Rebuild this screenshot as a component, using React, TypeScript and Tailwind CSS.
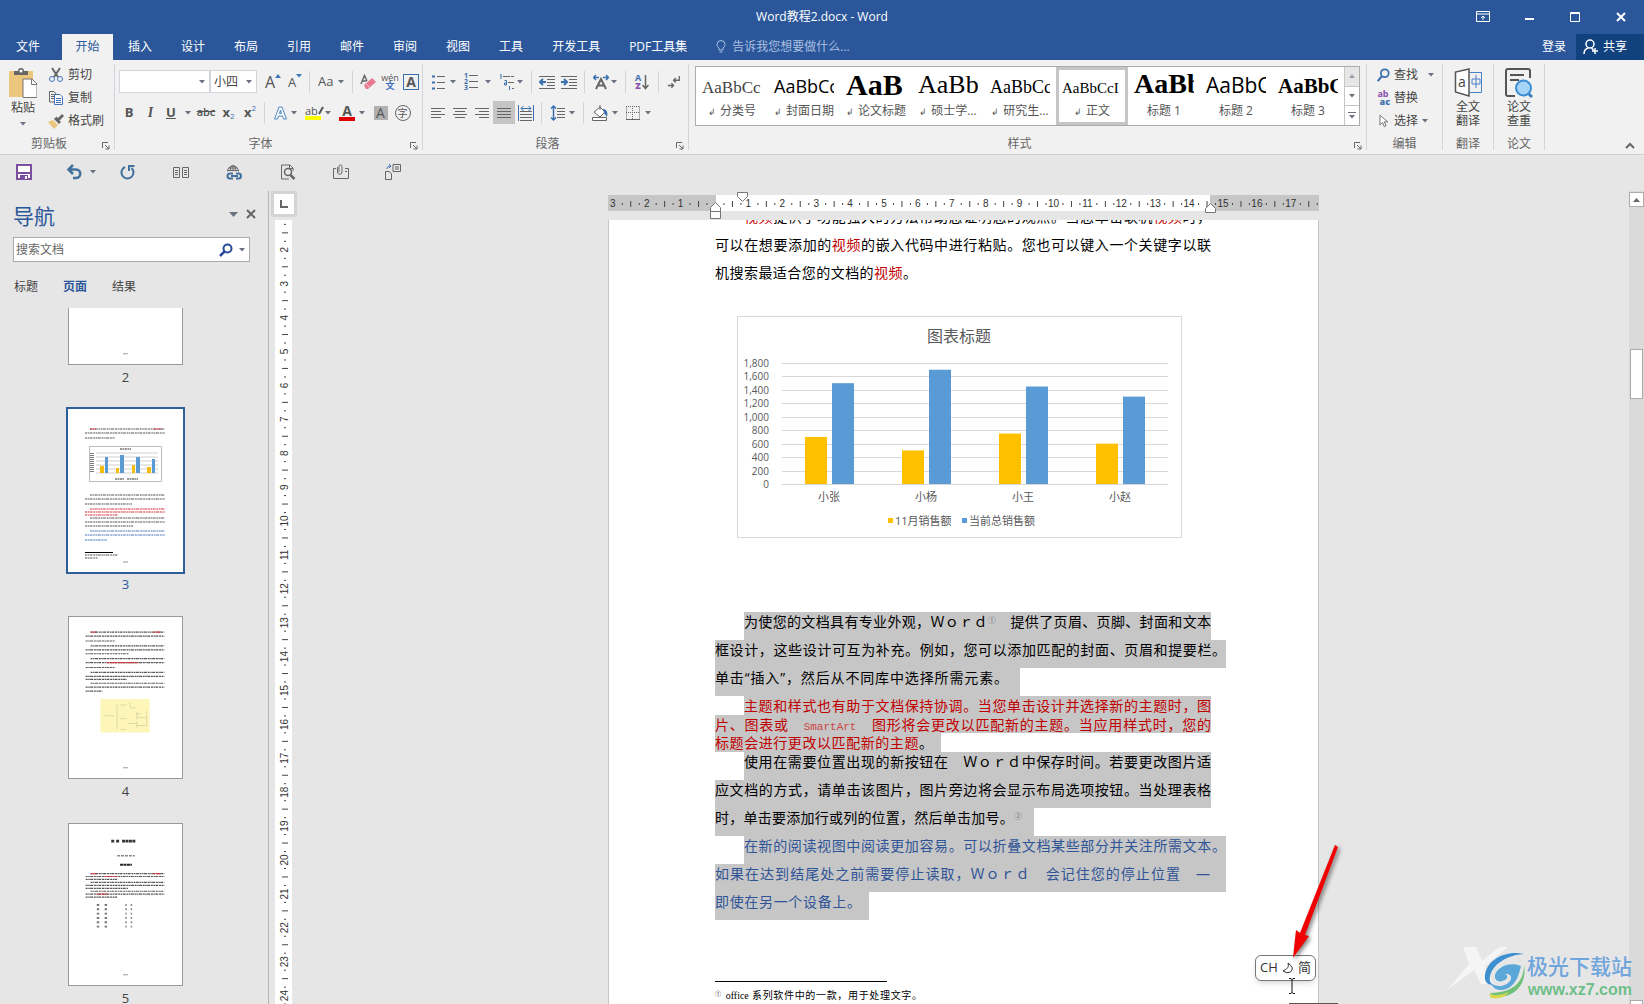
import type { ReactNode } from "react";

const Caret = ({ className = "text-gray-500" }: { className?: string }) => (
  <svg viewBox="0 0 6 4" className={`h-1 w-1.5 shrink-0 ${className}`} fill="currentColor">
    <path d="M0 0h6L3 3.5z" />
  </svg>
);

const Sep = () => <div className="mx-1 h-[22px] w-px shrink-0 bg-gray-300" />;

interface ToolProps {
  label: string;
  width: string;
  caret?: boolean;
  active?: boolean;
  children: ReactNode;
}

function Tool({ label, width, caret, active, children }: ToolProps) {
  return (
    <button
      aria-label={label}
      className={`flex h-[23px] shrink-0 items-center ${width} ${caret ? "justify-between pr-1 pl-1" : "justify-center"} ${active ? "bg-[#c5c5c5]" : ""}`}
    >
      {children}
      {caret && <Caret />}
    </button>
  );
}

function Icon({ children, size = "h-4 w-4", box = "0 0 16 16" }: { children: ReactNode; size?: string; box?: string }) {
  return (
    <svg viewBox={box} className={`shrink-0 ${size}`} fill="none" stroke="#666" strokeWidth="1">
      {children}
    </svg>
  );
}

function Group({ label, width, launcher, children }: { label: string; width: string; launcher?: boolean; children: ReactNode }) {
  return (
    <section className={`my-1 flex shrink-0 flex-col border-r border-gray-300 ${width}`}>
      <div className="h-[72px]">{children}</div>
      <div className={`relative h-[14px] text-center leading-[15px] text-[#666] ${launcher ? "pr-4" : ""}`}>
        {label}
        {launcher && (
          <button aria-label={`${label}设置`} className="absolute right-1 bottom-0">
            <Icon size="h-2 w-2" box="0 0 8 8">
              <path d="M.5 6V.5H6M3 3l4 4M7 3.5V7H3.5" />
            </Icon>
          </button>
        )}
      </div>
    </section>
  );
}

const tabs = ["插入", "设计", "布局", "引用", "邮件", "审阅", "视图", "工具", "开发工具", "PDF工具集"];

function TitleBar() {
  return (
    <header className="bg-[#2b579a] text-white">
      <div className="flex h-[34px] items-center">
        <div className="flex-1" />
        <h1 className="text-xs">Word教程2.docx - Word</h1>
        <div className="flex flex-1 justify-end">
          <button aria-label="功能区显示选项" className="flex w-[46px] justify-center">
            <svg viewBox="0 0 14 12" className="h-3 w-3.5" fill="none" stroke="#fff">
              <path d="M.5.5h13v10H.5zM.5 3h13M7 9V5M5 7l2-2 2 2" />
            </svg>
          </button>
          <button aria-label="最小化" className="flex w-[46px] justify-center">
            <svg viewBox="0 0 12 12" className="h-3 w-3" stroke="#fff" strokeWidth="2">
              <path d="M2 8h9" />
            </svg>
          </button>
          <button aria-label="最大化" className="flex w-[46px] justify-center">
            <svg viewBox="0 0 12 12" className="h-3 w-3" fill="none" stroke="#fff">
              <path d="M1.500 1.500h9v9h-9zM1 2.500h10" />
            </svg>
          </button>
          <button aria-label="关闭" className="flex w-[46px] justify-center">
            <svg viewBox="0 0 12 12" className="h-3 w-3" stroke="#fff" strokeWidth="2">
              <path d="M2 2l8 8M10 2l-8 8" />
            </svg>
          </button>
        </div>
      </div>
      <nav className="flex h-[26px] items-stretch">
        <button className="w-[62px] pr-1.5">文件</button>
        <button className="mr-[2px] w-[51px] bg-[#f1f1f1] text-[#2b579a]">开始</button>
        <div className="flex gap-[3px]">
          {tabs.map((tab) => (
            <button key={tab} className="px-[13px]">{tab}</button>
          ))}
        </div>
        <label className="ml-4 flex flex-1 items-center gap-1.5">
          <svg viewBox="0 0 10 14" className="h-3.5 w-2.5" fill="none" stroke="#a9c1e5">
            <path d="M3 10V8C1 6.500 1 5 1 4.500a4 4 0 018 0C9 5 9 6.500 7 8v2zM3.500 12h3" />
          </svg>
          <input className="w-40 text-xs text-white placeholder:text-[#a9bfe0] focus:outline-none" placeholder="告诉我您想要做什么..." />
        </label>
        <button className="px-[10px]">登录</button>
        <button className="flex w-[68px] items-center gap-1 bg-[#12427e] pl-[7px]">
          <svg viewBox="0 0 16 16" className="h-4 w-4" fill="none" stroke="#fff" strokeWidth="1.500">
            <circle cx="7" cy="5" r="4" />
            <path d="M1 15c0-3 2-5.500 4.500-6M8.500 9l2 2M12 9v6M9 12h6" />
          </svg>
          共享
        </button>
      </nav>
    </header>
  );
}

function ClipboardGroup() {
  return (
    <Group label="剪贴板" width="w-[115px]" launcher>
      <div className="flex">
        <button className="flex w-[46px] flex-col items-center pt-1">
          <svg viewBox="0 0 28 30" className="h-[30px] w-7">
            <path d="M0 3h24v26H0z" fill="#ecc67d" />
            <path d="M5 3h4a3 3 0 016 0h4v4H5z" fill="#666" />
            <circle cx="12" cy="3" r="1.500" fill="#fff" />
            <path d="M14 11h9l5 5v13.500H14z" fill="#fff" stroke="#777" />
            <path d="M22.500 11v5.500H28" fill="none" stroke="#777" />
          </svg>
          <span className="h-5 leading-5 text-[#444]">粘贴</span>
          <span className="pt-1"><Caret /></span>
        </button>
        <div className="flex flex-col pl-0.5 text-[#444]">
          <button className="flex h-[22px] items-center gap-1">
            <Icon>
              <path d="M4 1l6 9M12 1L6 10" strokeWidth="2" />
              <circle cx="4" cy="12" r="2.500" stroke="#4472b8" />
              <circle cx="12" cy="12" r="2.500" stroke="#4472b8" />
            </Icon>
            剪切
          </button>
          <button className="flex h-[23px] items-center gap-1">
            <Icon>
              <path d="M6 12H1.500V1.500H6L8 4M3 4.500h3M3 6.500h3M3 8.500h3" stroke="#666" />
              <path d="M6.500 4.500H12l2.500 2.500v7.500h-8zM8 8.500h5M8 10.500h5M8 12.500h5" stroke="#4472b8" fill="#fff" />
            </Icon>
            复制
          </button>
          <button className="flex h-[23px] items-center gap-1">
            <Icon>
              <path d="M0 9l5-2 5 5-4 4z" fill="#ecc67d" stroke="none" />
              <path d="M6 6l5 5 2-2-1.500-1.500L16 3l-2-2-4 4-1.500-1.500z" fill="#666" stroke="none" />
            </Icon>
            格式刷
          </button>
        </div>
      </div>
    </Group>
  );
}

function Combo({ label, value, width }: { label: string; value: string; width: string }) {
  return (
    <div className={`relative flex h-[23px] items-center border border-gray-300 bg-white ${width}`}>
      <select aria-label={label} defaultValue={value} className="h-full w-full appearance-none pl-[3px] text-xs text-[#444]">
        <option>{value}</option>
      </select>
      <span className="pointer-events-none absolute right-1 flex"><Caret /></span>
    </div>
  );
}

function FontGroup() {
  return (
    <Group label="字体" width="w-[308px]" launcher>
      <div className="flex flex-col gap-2 pt-[6px] pl-1 text-[#555]">
        <div className="flex items-center">
          <Combo label="字体" value="" width="w-[91px]" />
          <Combo label="字号" value="小四" width="w-[47px]" />
          <Tool label="增大字号" width="w-[24px] ml-1">
            <span className="text-base leading-4">A</span>
            <span className="mb-3 text-[#3b78b8]"><svg viewBox="0 0 6 4" className="h-1 w-1.5" fill="currentColor"><path d="M0 4h6L3 0z" /></svg></span>
          </Tool>
          <Tool label="减小字号" width="w-[20px]">
            <span className="text-[13px] leading-4">A</span>
            <span className="mb-3 flex"><Caret className="text-[#3b78b8]" /></span>
          </Tool>
          <Sep />
          <Tool label="更改大小写" width="w-[34px]" caret><span className="text-[13px]">Aa</span></Tool>
          <Sep />
          <Tool label="清除格式" width="w-[22px]">
            <Icon>
              <path d="M1 10L4.500 1.500 7 7M2.500 7h4" strokeWidth="1.500" />
              <path d="M4 11l8-7 4 4-8 7H6z" fill="#e8798e" stroke="none" />
              <path d="M6 9.500l3.500 4" stroke="#f8d0d8" />
            </Icon>
          </Tool>
          <Tool label="拼音指南" width="w-[22px]">
            <span className="flex flex-col items-center text-[9px] leading-[8px]">wén<b className="font-bold text-[#3b6fc4]">文</b></span>
          </Tool>
          <Tool label="字符边框" width="w-[20px]">
            <span className="h-4 w-4 border border-[#3b6fae] text-sm leading-[14px] font-bold">A</span>
          </Tool>
        </div>
        <div className="flex items-center">
          <Tool label="加粗" width="w-[20px]"><b className="text-[13px]">B</b></Tool>
          <Tool label="倾斜" width="w-[23px]"><i className="font-['Liberation_Serif',serif] text-sm font-bold">I</i></Tool>
          <Tool label="下划线" width="w-[33px]" caret><span className="text-[13px] font-bold underline">U</span></Tool>
          <Tool label="删除线" width="w-[22px]"><s className="text-[11px] font-semibold">abc</s></Tool>
          <Tool label="下标" width="w-[23px]"><b className="text-[13px]">x</b><span className="mt-2 text-[8px] text-[#3b6fae]">2</span></Tool>
          <Tool label="上标" width="w-[20px]"><b className="text-[13px]">x</b><span className="mb-2 text-[8px] text-[#3b6fae]">2</span></Tool>
          <Sep />
          <Tool label="文本效果" width="w-[32px]" caret>
            <Icon>
              <path d="M1.500 14L6 2h3l4.500 12h-3l-1-3h-4l-1 3zM6.500 8.500h2L7.500 5z" stroke="#4a86c8" fill="#fff" />
            </Icon>
          </Tool>
          <Tool label="突出显示" width="w-[34px]" caret>
            <span className="flex flex-col">
              <span className="flex h-[11px] items-center text-[11px] leading-[10px]">ab
                <svg viewBox="0 0 6 10" className="h-2.5 w-1.5" stroke="#555" strokeWidth="2"><path d="M5 1L1 8" /></svg>
              </span>
              <span className="h-1 w-4 bg-[#ffff00]" />
            </span>
          </Tool>
          <Tool label="字体颜色" width="w-[34px]" caret>
            <span className="flex flex-col items-center">
              <b className="h-3 text-sm leading-3">A</b>
              <span className="h-1 w-4 bg-[#e00000]" />
            </span>
          </Tool>
          <Tool label="字符底纹" width="w-[23px]">
            <span className="h-3.5 w-3.5 bg-[#b0b0b0] text-sm leading-[14px]">A</span>
          </Tool>
          <Tool label="带圈字符" width="w-[21px]">
            <span className="h-4 w-4 rounded-full border border-[#666] text-[10px] leading-[14px]">字</span>
          </Tool>
        </div>
      </div>
    </Group>
  );
}

function ParagraphGroup() {
  return (
    <Group label="段落" width="w-[266px]" launcher>
      <div className="flex flex-col gap-2 pt-[6px] pl-1">
        <div className="flex items-center">
          <Tool label="项目符号" width="w-[33px]" caret>
            <Icon>
              <path d="M6 2.500h8M6 8.500h8M6 14.500h8" />
              <path d="M1 1.500h3v2H1zM1 7.500h3v2H1zM1 13.500h3v2H1z" fill="#3b6fae" stroke="none" />
            </Icon>
          </Tool>
          <Tool label="编号" width="w-[35px]" caret>
            <span className="flex">
              <span className="flex flex-col text-[7px] leading-[6px] font-bold text-[#3b6fae]"><i className="not-italic">1</i><i className="not-italic">2</i><i className="not-italic">3</i></span>
              <Icon size="h-4 w-2.5" box="0 0 10 16"><path d="M1 2.500h9M1 8.500h9M1 14.500h9" /></Icon>
            </span>
          </Tool>
          <Tool label="多级列表" width="w-[32px]" caret>
            <Icon>
              <path d="M4 2.500h11M9 8.500h6M13 14.500h2" strokeDasharray="7 1" />
              <path d="M1 1l1-.5V5M5.500 6.500h2V11h-2V9h2M10.500 12v4" stroke="#3b6fae" />
            </Icon>
          </Tool>
          <Sep />
          <Tool label="减少缩进" width="w-[22px]">
            <Icon>
              <path d="M0 2.500h16M8 5.500h8M8 8.500h8M8 11.500h8M0 14.500h16" />
              <path d="M7 8H2M4 5L1 8l3 3" stroke="#3b6fae" strokeWidth="2" />
            </Icon>
          </Tool>
          <Tool label="增加缩进" width="w-[22px]">
            <Icon>
              <path d="M0 2.500h16M8 5.500h8M8 8.500h8M8 11.500h8M0 14.500h16" />
              <path d="M0 8h5M3 5l3 3-3 3" stroke="#3b6fae" strokeWidth="2" />
            </Icon>
          </Tool>
          <Sep />
          <Tool label="中文版式" width="w-[32px]" caret>
            <Icon>
              <path d="M3 15L8 5l5 10M5 11.500h6" strokeWidth="2" />
              <path d="M6 3.500H1M3 1L.5 3.500 3 6M10 3.500h5M13 1l2.500 2.500L13 6" stroke="#3b6fae" strokeWidth="1.500" />
            </Icon>
          </Tool>
          <Sep />
          <Tool label="排序" width="w-[24px]">
            <span className="flex flex-col text-[9px] leading-[8px] font-bold text-[#3b6fae]">A<b className="text-[#8a4fae]">Z</b></span>
            <Icon size="h-4 w-2" box="0 0 8 16"><path d="M4.500 1v13M1.500 11l3 3.500 3-3.500" strokeWidth="1.500" /></Icon>
          </Tool>
          <Sep />
          <Tool label="显示编辑标记" width="w-[22px]">
            <Icon size="h-3.5 w-3.5">
              <path d="M14 1v5H8M10 3.500L7.500 6 10 8.500M1 12h6M5 9.500L7.500 12 5 14.500" strokeWidth="1.500" />
            </Icon>
          </Tool>
        </div>
        <div className="flex items-center">
          <Tool label="左对齐" width="w-[22px]"><Icon size="h-3.5 w-3.5" box="0 0 14 14"><path d="M0 2.500h14M0 5.500h10M0 8.500h14M0 11.500h10" /></Icon></Tool>
          <Tool label="居中" width="w-[22px]"><Icon size="h-3.5 w-3.5" box="0 0 14 14"><path d="M0 2.500h14M2 5.500h10M0 8.500h14M2 11.500h10" /></Icon></Tool>
          <Tool label="右对齐" width="w-[22px]"><Icon size="h-3.5 w-3.5" box="0 0 14 14"><path d="M0 2.500h14M4 5.500h10M0 8.500h14M4 11.500h10" /></Icon></Tool>
          <Tool label="两端对齐" width="w-[22px]" active><Icon size="h-3.5 w-3.5" box="0 0 14 14"><path d="M0 2.500h14M0 5.500h14M0 8.500h14M0 11.500h14" /></Icon></Tool>
          <Tool label="分散对齐" width="w-[22px]">
            <Icon>
              <path d="M.5 0v16M15.500 0v16M3 3.500h10M5.500 1L3 3.500 5.500 6M10.500 1L13 3.500 10.500 6" stroke="#3b6fae" />
              <path d="M2 6.500h12M2 9.500h12M2 12.500h12M2 15.500h12" />
            </Icon>
          </Tool>
          <Sep />
          <Tool label="行距" width="w-[33px]" caret>
            <Icon>
              <path d="M3.500 1v14M1 3.500L3.500 1 6 3.500M1 12.500L3.500 15 6 12.500" stroke="#3b6fae" strokeWidth="1.500" />
              <path d="M7 3.500h8M7 6.500h8M7 9.500h8M7 12.500h8" />
            </Icon>
          </Tool>
          <Sep />
          <Tool label="底纹" width="w-[34px]" caret>
            <Icon>
              <path d="M2 7l6-5 5 5-5 5zM8 5V0" fill="#fff" />
              <path d="M11 4c4 0 5 4 4 8l-3-4z" fill="#3b6fae" stroke="none" />
              <path d="M.5 12.500h14v3H.5z" fill="#fff" />
            </Icon>
          </Tool>
          <Tool label="边框" width="w-[33px]" caret>
            <Icon size="h-3.5 w-3.5" box="0 0 14 14">
              <path d="M.5.5v13M13.500.5v13M6.500 0v14M0 .5h14M0 6.500h14" strokeDasharray="1 1" />
              <path d="M0 13.500h14" />
            </Icon>
          </Tool>
        </div>
      </div>
    </Group>
  );
}

const styleItems = [
  { name: "分类号", sample: "AaBbCc", mark: true, look: "text-[17px] font-light text-[#444] font-['Liberation_Serif',serif]" },
  { name: "封面日期", sample: "AaBbCc", mark: true, look: "text-[18px] font-medium" },
  { name: "论文标题", sample: "AaB", mark: true, look: "text-[30px] font-black font-['Liberation_Serif',serif]" },
  { name: "硕士学...", sample: "AaBb", mark: true, look: "text-[26px] font-['Liberation_Serif',serif]" },
  { name: "研究生...", sample: "AaBbCc", mark: true, look: "text-[18px] font-['Liberation_Serif',serif]" },
  { name: "正文", sample: "AaBbCcI", mark: true, selected: true, look: "text-[15px] font-['Liberation_Serif',serif]" },
  { name: "标题 1", sample: "AaBb", look: "text-[28px] font-bold font-['Liberation_Serif',serif]" },
  { name: "标题 2", sample: "AaBbC", look: "text-[21px]" },
  { name: "标题 3", sample: "AaBbC", look: "text-[21px] font-bold font-['Liberation_Serif',serif]" },
];

function StylesGroup() {
  return (
    <Group label="样式" width="w-[678px]" launcher>
      <div className="mt-[2px] ml-[6px] flex h-[60px] w-[665px] border border-[#ababab] bg-white">
        {styleItems.map((item) => (
          <button key={item.name} className={`w-[72px] shrink-0 overflow-hidden border-[3px] px-[3px] ${item.selected ? "border-[#c6c6c6]" : "border-transparent"}`}>
            <div className="h-[34px] w-[60px] overflow-hidden text-left text-base leading-[34px] whitespace-nowrap text-black">
              <span className={`leading-none ${item.look}`}>{item.sample}</span>
            </div>
            <div className="h-[18px] text-center text-xs leading-[14px] whitespace-nowrap text-[#555]">
              {item.mark && <span className="mr-1 text-[9px]">↲</span>}
              {item.name}
            </div>
          </button>
        ))}
        <div className="flex w-[15px] flex-col border-l border-[#c6c6c6]">
          <button aria-label="上一行" className="flex flex-1 items-center justify-center bg-[#e6e6e6]"><svg viewBox="0 0 6 4" className="h-1 w-1.5 text-gray-400" fill="currentColor"><path d="M0 4h6L3 0z" /></svg></button>
          <button aria-label="下一行" className="flex flex-1 items-center justify-center border-y border-[#c6c6c6]"><Caret /></button>
          <button aria-label="其他样式" className="flex flex-1 flex-col items-center justify-center gap-0.5"><span className="h-px w-2 bg-gray-500" /><Caret /></button>
        </div>
      </div>
    </Group>
  );
}

function Ribbon() {
  return (
    <div className="flex h-[95px] border-b border-[#d0d0d0] bg-[#f1f1f1]">
      <ClipboardGroup />
      <FontGroup />
      <ParagraphGroup />
      <StylesGroup />
      <Group label="编辑" width="w-[76px]">
        <div className="flex flex-col pl-[9px] text-[#444]">
          <button className="flex h-[22px] items-center gap-1">
            <Icon size="h-3.5 w-3.5">
              <circle cx="10" cy="6" r="4.500" stroke="#3b6fae" strokeWidth="2" />
              <path d="M7 9l-5 6" stroke="#3b6fae" strokeWidth="2.500" />
            </Icon>
            查找<span className="ml-1.5"><Caret /></span>
          </button>
          <button className="flex h-[23px] items-center gap-1">
            <span className="flex w-3.5 flex-col text-[9px] leading-[8px] font-bold text-[#8a4fae]">ab<b className="text-right text-[#3b6fae]">ac</b></span>
            替换
          </button>
          <button className="flex h-[23px] items-center gap-1">
            <Icon size="h-3.5 w-3.5"><path d="M4.500 1.500v11l3-3 2 5 2-1-2-4.500h4z" fill="#fff" /></Icon>
            选择<Caret />
          </button>
        </div>
      </Group>
      <Group label="翻译" width="w-[51px]">
        <button className="flex w-full flex-col items-center pt-1 leading-[14px] text-[#444]">
          <svg viewBox="0 0 28 30" className="mb-0.5 h-[30px] w-7" fill="none" stroke="#555">
            <path d="M15 1L1.500 4v20L15 28z" fill="#fff" strokeWidth="1.500" />
            <path d="M16 4.500h11.500v20H16M18 11h8v5h-8zM22 7v13" stroke="#4a80c8" />
            <text x="4" y="19" fontSize="14" fill="#444" stroke="none">a</text>
          </svg>
          全文<br />翻译
        </button>
      </Group>
      <Group label="论文" width="w-[51px]">
        <button className="flex w-full flex-col items-center pt-1 leading-[14px] text-[#444]">
          <svg viewBox="0 0 28 30" className="mb-0.5 h-[30px] w-7" fill="none" stroke="#555" strokeWidth="2">
            <path d="M25 10V3q0-2-2-2H3Q1 1 1 3v23q0 2 2 2h7M5 7h14M5 12h9" />
            <path d="M23 25l4 4" stroke="#3b7fc0" strokeWidth="3" />
            <circle cx="18.500" cy="20" r="7.500" fill="#a6d4f5" stroke="#3b8fd8" />
          </svg>
          论文<br />查重
        </button>
      </Group>
      <div className="flex flex-1 items-end justify-end p-1 pr-[9px]">
        <button aria-label="折叠功能区" className="flex">
          <Icon size="h-2 w-2.5" box="0 0 10 8"><path d="M1 6l4-4 4 4" strokeWidth="2" /></Icon>
        </button>
      </div>
    </div>
  );
}

function QuickAccess() {
  return (
    <div className="flex h-9 items-center pb-0.5 pl-4">
      <button aria-label="保存" className="w-12">
        <svg viewBox="0 0 16 16" className="h-4 w-4">
          <path d="M1 1h14v14H1z" fill="#fff" stroke="#7b4fa0" strokeWidth="2" />
          <path d="M1 8h14v2H1zM4 11h8v4H4z" fill="#7b4fa0" />
          <path d="M9 12h2v3H9z" fill="#fff" />
        </svg>
      </button>
      <button aria-label="撤消" className="flex w-14 items-center gap-2 pl-0.5">
        <Icon><path d="M7 1L2.500 5.500 7 10M3 5.500h7a4 4 0 010 8.500H7" stroke="#41719c" strokeWidth="2.500" /></Icon>
        <Caret />
      </button>
      <button aria-label="恢复" className="w-[53px]">
        <Icon><path d="M5 3a6 6 0 106.500 1M9 7V2h5.500" stroke="#41719c" strokeWidth="2" /></Icon>
      </button>
      <button aria-label="双页" className="w-[53px]">
        <Icon><path d="M.5 3.500h6v10h-6zM9.500 3.500h6v10h-6zM2 6.500h3M2 8.500h3M2 10.500h3M11 6.500h3M11 8.500h3M11 10.500h3" /></Icon>
      </button>
      <button aria-label="超链接" className="w-[54px]">
        <Icon>
          <path d="M1.500 7.500a5.500 5.500 0 1111 0M7 1v6M1.500 6.500h11M2.500 4h9M4.500 7q-.5-4 2-6M9.500 7q.5-4-2-6" />
          <path d="M7 9.500H4a2.300 2.300 0 000 5h3M10 9.500h2.500a2.300 2.300 0 010 5H10M5 12h7" stroke="#41719c" strokeWidth="2" />
        </Icon>
      </button>
      <button aria-label="打印预览" className="w-[53px]">
        <Icon>
          <path d="M13 7V4l-3-3H1.500v14H9M9.500 1v3.500H13" />
          <circle cx="8" cy="8" r="3.500" strokeWidth="1.500" />
          <path d="M10.500 11l4 4" strokeWidth="2.500" />
        </Icon>
      </button>
      <button aria-label="附件" className="w-[52px]">
        <Icon>
          <path d="M3 4.500H.5v10h15v-10H12M12 7.500h2" />
          <path d="M4.500 3v5a2 2 0 004.500 0V2.500a1.500 1.500 0 00-3 0V8" />
        </Icon>
      </button>
      <button aria-label="切换窗口">
        <Icon>
          <path d="M.5 7.500H4l2.500 2v6h-6zM8 .5h7.500v7H8zM10 3h4M10 5h4" />
          <path d="M2 5c0-2 1-3 4-3M4 0l2 2-2 2" stroke="#3b6fae" />
        </Icon>
      </button>
    </div>
  );
}

// one blurred-down paragraph line in a page thumbnail
function MiniLine({ y, x = 17, w = 80, color = "#555" }: { y: number; x?: number; w?: number; color?: string }) {
  return <path d={`M${x} ${y}h${w}`} stroke={color} strokeWidth="1.200" strokeDasharray="2 .6 1.400 .5 3 .8" />;
}

function Thumb({ page, selected, children }: { page: number; selected?: boolean; children?: ReactNode }) {
  return (
    <a href={`#page-${page}`} className="flex flex-col items-center">
      <svg viewBox="0 0 115 163" className={`h-[163px] w-[115px] bg-white ${selected ? "outline-2 outline-[#2f5f97]" : "border border-[#999]"}`} fill="none">
        {children}
        <path d="M55 153h5" stroke="#999" />
      </svg>
      <span className={`h-6 text-[13px] leading-6 ${selected ? "text-[#2b579a]" : "text-[#444]"}`}>{page}</span>
    </a>
  );
}

function NavPane() {
  const red = "#d8303a";
  return (
    <aside className="flex w-[269px] shrink-0 flex-col border-r border-[#b5b5b5] text-[#444]">
      <div className="flex h-[46px] shrink-0 items-center pr-3 pl-[13px]">
        <h2 className="flex-1 pt-1 text-[21px] text-[#2b579a]">导航</h2>
        <button aria-label="选项" className="mr-2 text-gray-500">
          <svg viewBox="0 0 9 5" className="h-[5px] w-[9px]" fill="currentColor"><path d="M0 0h9L4.500 5z" /></svg>
        </button>
        <button aria-label="关闭导航"><Icon size="h-2.5 w-2.5" box="0 0 10 10"><path d="M1 1l8 8M9 1L1 9" strokeWidth="2" /></Icon></button>
      </div>
      <div className="mr-[18px] ml-[13px] flex h-[25px] shrink-0 items-center border border-[#ababab] bg-white pr-1 pl-0.5">
        <input aria-label="搜索文档" placeholder="搜索文档" className="min-w-0 flex-1 text-xs placeholder:text-[#666]" />
        <button aria-label="搜索" className="mr-1.5">
          <Icon size="h-3.5 w-3.5" box="0 0 14 14">
            <circle cx="8.500" cy="5.500" r="4" stroke="#2b4a9a" strokeWidth="2" />
            <path d="M5.500 8.500L1 13" stroke="#2b4a9a" strokeWidth="2.500" />
          </Icon>
        </button>
        <Caret />
      </div>
      <div className="flex h-[46px] shrink-0 items-center gap-[25px] pt-1 pl-[14px]">
        <button>标题</button>
        <button className="font-bold text-[#2b579a]">页面</button>
        <button>结果</button>
      </div>
      <div className="flex min-h-0 flex-1 flex-col overflow-hidden pr-[17px]">
        <div className="-mt-[106px] flex flex-col gap-5 [clip-path:inset(106px_0_0_0)]">
          <Thumb page={2} />
          <Thumb page={3} selected>
            <MiniLine y={20} x={22} w={75} />
            <MiniLine y={20} x={22} w={6} color={red} />
            <MiniLine y={20} x={86} w={7} color={red} />
            <MiniLine y={24} />
            <MiniLine y={29} w={30} />
            <path d="M21.500 37.500h72v35h-72z" stroke="#bbb" />
            <path d="M28 44h62M28 48h62M28 52h62M28 56h62M28 60h62M28 64h62" stroke="#bbb" strokeWidth=".7" />
            <path d="M52 40h11M47 70h9M59 70h11" stroke="#777" strokeWidth="1.500" strokeDasharray="2 .5" />
            <path d="M24 44v20" stroke="#777" strokeWidth="4" strokeDasharray="1 1" />
            <path d="M32 57h4v7h-4zM48 59h3v5h-3zM64 56h3v8h-3zM79 58h4v6h-4z" fill="#f5bd10" />
            <path d="M37 48h3v16h-3zM52 46h4v18h-4zM68 48h4v16h-4zM84 50h3v14h-3z" fill="#5b9bd5" />
            <MiniLine y={86} x={22} w={75} />
            <MiniLine y={90} />
            <MiniLine y={95} w={47} />
            <MiniLine y={100} x={22} w={75} color={red} />
            <MiniLine y={103} color={red} />
            <MiniLine y={106} w={33} color={red} />
            <MiniLine y={109} x={22} w={75} />
            <MiniLine y={113} />
            <MiniLine y={117} w={48} />
            <MiniLine y={122} x={22} w={75} color="#4a76c0" />
            <MiniLine y={126} color="#4a76c0" />
            <MiniLine y={131} w={22} color="#4a76c0" />
            <path d="M17 143.500h28" stroke="#000" />
            <MiniLine y={146} w={33} />
            <MiniLine y={149} w={13} />
          </Thumb>
          <Thumb page={4}>
            <MiniLine y={15} x={22} w={75} />
            <MiniLine y={15} x={22} w={6} color={red} />
            <MiniLine y={15} x={86} w={7} color={red} />
            <MiniLine y={19} />
            <MiniLine y={24} w={30} />
            <MiniLine y={29} x={22} w={75} />
            <MiniLine y={33} />
            <MiniLine y={37} w={44} />
            <MiniLine y={42} x={22} w={75} />
            <MiniLine y={46} />
            <MiniLine y={46} x={39} w={31} color={red} />
            <MiniLine y={51} w={30} />
            <MiniLine y={56} x={22} w={75} />
            <MiniLine y={60} />
            <MiniLine y={63} w={42} />
            <MiniLine y={67} x={22} w={75} />
            <MiniLine y={71} />
            <MiniLine y={75} w={17} />
            <path d="M32 83h50v34H32z" fill="#fdf6b8" />
            <path d="M36 100h10M52 89h7M52 103h7M52 114h6M49 89v25M62 86v5M62 92h6M69 96v8M69 98h4M69 102h9M60 108h9M69 106v6M69 110h9M79 95v16" stroke="#c4bc98" strokeWidth=".5" />
          </Thumb>
          <Thumb page={5}>
            <path d="M43 17h30" stroke="#333" strokeWidth="3" strokeDasharray="3 2 3 3 3 .5 3 .5 3 .5 3 9" />
            <path d="M49 32h18" stroke="#888" strokeWidth="1.500" strokeDasharray="3 1" />
            <path d="M52 41h12" stroke="#222" strokeWidth="2" strokeDasharray="3 .5" />
            <MiniLine y={50} x={22} w={75} />
            <MiniLine y={50} x={22} w={6} color={red} />
            <MiniLine y={50} x={86} w={7} color={red} />
            <MiniLine y={53} />
            <MiniLine y={53} x={36} w={13} color={red} />
            <MiniLine y={56} w={32} />
            <MiniLine y={59} x={22} w={75} />
            <MiniLine y={62} />
            <MiniLine y={65} w={43} />
            <MiniLine y={68} x={22} w={75} />
            <MiniLine y={71} />
            <MiniLine y={71} x={29} w={10} color={red} />
            <MiniLine y={74} w={32} />
            <path d="M29.500 81v26M37.500 81v26" stroke="#777" strokeWidth="2.500" strokeDasharray="2 2.400" />
            <path d="M58 81v26M63.500 81v26" stroke="#888" strokeWidth="1.500" strokeDasharray="2 2.400" />
          </Thumb>
        </div>
      </div>
    </aside>
  );
}

const UNIT = 33.9;

function VerticalRuler() {
  const marks = Array.from({ length: 25 }, (_, i) => i + 1);
  return (
    <div className="flex w-[29px] shrink-0 flex-col items-center">
      <button aria-label="制表符" className="flex h-[26px] w-[26px] shrink-0 items-center justify-center border-[3px] border-[#d4d4d4] bg-white">
        <Icon size="h-2 w-2" box="0 0 8 8"><path d="M1 0v7h7" strokeWidth="2" /></Icon>
      </button>
      <svg className="mt-[3px] min-h-0 w-[17px] flex-1 bg-white" stroke="#444">
        {marks.map((n) => {
          const y = n * UNIT - 38;
          return (
            <g key={n}>
              {n > 1 && <text fontFamily="Liberation Sans" fontSize="10" fill="#333" stroke="none" textAnchor="middle" transform={`translate(13 ${y}) rotate(-90)`}>{n}</text>}
              <path d={`M9 ${y + UNIT / 4}h2M7 ${y + UNIT / 2}h6M9 ${y + UNIT * 0.75}h2`} />
            </g>
          );
        })}
      </svg>
    </div>
  );
}

function HorizontalRuler() {
  const marks = Array.from({ length: 21 }, (_, i) => i - 3);
  return (
    <svg viewBox="0 0 711 29" className="z-10 h-[29px] w-[711px] shrink-0" stroke="#444">
      <path d="M0 4h711v16H0z" fill="#c6c6c6" stroke="none" />
      <path d="M108 4h494v16H108z" fill="#fff" stroke="none" />
      {marks.map((n) => {
        const x = 107.5 + n * UNIT;
        return (
          <g key={n}>
            {n !== 0 && <text x={x - 1} y="16" fontFamily="Liberation Sans" fontSize="10" fill="#333" stroke="none" textAnchor="middle">{Math.abs(n)}</text>}
            <path d={`M${x + UNIT / 4} 12v2M${x + UNIT / 2} 10v6M${x + UNIT * 0.75} 12v2`} />
          </g>
        );
      })}
      <path d="M129.500 1.500h10v4l-5 5-5-5z" fill="#fff" stroke="#777" />
      <path d="M102.500 20.500v-4l5-5 5 5v4zM102.500 20.500h10v7h-10z" fill="#fff" stroke="#777" />
      <path d="M597.500 21.500v-4l5-5 5 5v4z" fill="#fff" stroke="#777" />
    </svg>
  );
}

const chartData = [
  { name: "小张", month: 700, total: 1500 },
  { name: "小杨", month: 500, total: 1700 },
  { name: "小王", month: 750, total: 1450 },
  { name: "小赵", month: 600, total: 1300 },
];

function SalesChart() {
  const scale = 121 / 1800;
  return (
    <svg viewBox="0 0 443 220" className="mt-[25px] ml-[22px] h-[222px] w-[445px] border border-[#d9d9d9]" fill="#595959" fontSize="11">
      <text x="221" y="25" fontSize="16" textAnchor="middle">图表标题</text>
      {Array.from({ length: 10 }, (_, i) => i * 200).map((v) => (
        <g key={v}>
          <path d={`M44 ${Math.round(167 - v * scale) + 0.5}h386`} stroke="#d9d9d9" />
          <text x="31" y={171 - v * scale} fontSize="10" textAnchor="end">{v.toLocaleString("en-US")}</text>
        </g>
      ))}
      {chartData.map((d, i) => {
        const x = 67 + i * 97;
        return (
          <g key={d.name}>
            <rect x={x} y={167 - d.month * scale} width="22" height={d.month * scale} fill="#ffc000" />
            <rect x={x + 27} y={167 - d.total * scale} width="22" height={d.total * scale} fill="#5b9bd5" />
            <text x={x + 24} y="184" textAnchor="middle">{d.name}</text>
          </g>
        );
      })}
      <path d="M150 201h5v5h-5z" fill="#ffc000" />
      <text x="157" y="208">11月销售额</text>
      <path d="M224 201h5v5h-5z" fill="#5b9bd5" />
      <text x="231" y="208">当前总销售额</text>
    </svg>
  );
}

function Line({ box, children }: { box: string; children: ReactNode }) {
  return <div className={`h-7 leading-[20px] whitespace-nowrap [text-align-last:justify] ${box}`}>{children}</div>;
}

const Note = ({ children }: { children: ReactNode }) => <sup className="text-[8px] text-[#777]">{children}</sup>;

const Red = ({ children }: { children: ReactNode }) => <span className="text-[#c00000]">{children}</span>;

function DocumentPage() {
  return (
    <main className="relative min-h-0 w-[711px] flex-1 overflow-hidden border-x border-[#c6c6c6] bg-white pl-[106px] text-sm text-black">
      <div className="-mt-[13px]">
        <Line box="ml-[29px] w-[467px]"><Red>视频</Red>提供了功能强大的方法帮助您证明您的观点。当您单击联机<Red>视频</Red>时，</Line>
        <Line box="w-[496px]">可以在想要添加的<Red>视频</Red>的嵌入代码中进行粘贴。您也可以键入一个关键字以联</Line>
        <Line box="w-[202px]">机搜索最适合您的文档的<Red>视频</Red>。</Line>
      </div>
      <SalesChart />
      <div className="mt-[74px]">
        <Line box="ml-[29px] w-[467px] bg-[#c6c6c6]">为使您的文档具有专业外观，Ｗｏｒｄ<Note>①</Note>　提供了页眉、页脚、封面和文本</Line>
        <Line box="w-[511px] bg-[#c6c6c6]">框设计，这些设计可互为补充。例如，您可以添加匹配的封面、页眉和提要栏。</Line>
        <Line box="w-[305px] bg-[#c6c6c6] pr-3">单击“插入”，然后从不同库中选择所需元素。</Line>
      </div>
      <div className="grid h-14 grid-rows-3 leading-[19px] whitespace-nowrap text-[#c00000] [text-align-last:justify]">
        <div className="ml-[29px] w-[467px] bg-[#c6c6c6]">主题和样式也有助于文档保持协调。当您单击设计并选择新的主题时，图</div>
        <div className="w-[496px] bg-[#c6c6c6]">片、图表或　<span className="font-['Liberation_Mono',monospace] text-[11px] text-[#cc4444]">SmartArt</span>　图形将会更改以匹配新的主题。当应用样式时，您的</div>
        <div className="w-[226px] bg-[#c6c6c6] pr-2">标题会进行更改以匹配新的主题<span className="text-black">。</span></div>
      </div>
      <Line box="ml-[29px] w-[467px] bg-[#c6c6c6]">使用在需要位置出现的新按钮在　Ｗｏｒｄ中保存时间。若要更改图片适</Line>
      <Line box="w-[496px] bg-[#c6c6c6]">应文档的方式，请单击该图片，图片旁边将会显示布局选项按钮。当处理表格</Line>
      <Line box="w-[319px] bg-[#c6c6c6] pr-3">时，单击要添加行或列的位置，然后单击加号。<Note>②</Note></Line>
      <div className="text-[#2f5496]">
        <Line box="ml-[29px] w-[482px] bg-[#c6c6c6]">在新的阅读视图中阅读更加容易。可以折叠文档某些部分并关注所需文本。</Line>
        <Line box="w-[511px] bg-[#c6c6c6] pr-4">如果在达到结尾处之前需要停止读取，Ｗｏｒｄ　会记住您的停止位置　—</Line>
        <Line box="w-[154px] bg-[#c6c6c6] pr-2">即使在另一个设备上。</Line>
      </div>
      <hr className="mt-[61px] w-[172px] border-black" />
      <p className="mt-1 w-[207px] font-['Liberation_Serif','Noto_Sans_CJK_SC',serif] text-[10px] leading-5 whitespace-nowrap [text-align-last:justify]">
        <sup className="mr-1 text-[6px]">①</sup>office 系列软件中的一款，用于处理文字。
      </p>
    </main>
  );
}

function ScrollBar() {
  return (
    <div className="flex w-[15px] shrink-0 flex-col items-center bg-[#dadada] pt-px">
      <button aria-label="向上滚动" className="flex h-[15px] w-[15px] items-center justify-center border border-[#ababab] bg-white">
        <svg viewBox="0 0 7 4" className="h-1 w-[7px]" fill="#666"><path d="M0 4h7L3.500 0z" /></svg>
      </button>
      <div className="mt-[142px] h-[50px] w-[13px] border border-[#ababab] bg-white" />
      <div className="flex-1" />
      <button aria-label="向下滚动" className="h-1 w-[13px] border border-b-0 border-[#ababab] bg-white" />
    </div>
  );
}

function Overlays() {
  return (
    <>
      <div className="absolute right-[328px] bottom-[23px] z-20 flex h-[26px] w-[61px] items-center justify-center gap-1 rounded-md border border-[#777] bg-white text-[13px] text-[#333] shadow-md">
        CH
        <svg viewBox="0 0 12 12" className="h-3 w-3" fill="none" stroke="#333"><path d="M6 1q2 5-5 8 4 3 7.500 1Q13 6 6 1z" /></svg>
        简
      </div>
      <svg viewBox="0 0 70 160" className="absolute right-[294px] bottom-0 z-20 h-[160px] w-[70px] drop-shadow-[2px_2px_2px_rgba(0,0,0,0.5)]" fill="#f00000">
        <path d="M55 1l3 2-33 88 4 1-16 22 3-28 4 3z" />
      </svg>
      <svg viewBox="0 0 8 16" className="absolute right-[348px] bottom-2.5 z-20 h-4 w-2" fill="none" stroke="#111"><path d="M1 .5h2l1 1 1-1h2M4 1v14M1 15.500h2l1-1 1 1h2" /></svg>
      <div className="absolute right-[306px] bottom-0 z-20 h-px w-[49px] bg-[#555]" />
      <div className="absolute right-3 bottom-1 z-20 flex items-end">
        <svg viewBox="0 0 84 54" className="h-[54px] w-[84px]">
          <path d="M20 1h13l6 14L56 1h9L42 20l8 18H38l-7-14L4 44l22-26z" fill="#fff" opacity=".6" />
          <path d="M81 8C62 4 44 14 42 29c-1 7 3 10 8 10-3-2-4-5-3-9C50 18 64 9 81 8z" fill="#3d8fd0" />
          <path d="M78 20c-11-5-24 1-26 9-1 6 5 8 10 5 3-2 3-5 0-6 7-1 8 5 3 9-6 5-14 3-17 0 2 8 12 9 19 4 6-4 9-12 11-21z" fill="#5ba8d8" />
          <path d="M81 19c0 14-8 28-34 28 2 3 5 4 9 4 18-1 28-15 25-32z" fill="#6fc07a" />
          <path d="M46 48q10 3 20-2-6 8-18 6z" fill="#d9d84a" />
        </svg>
        <div className="text-right whitespace-nowrap">
          <div className="text-[21px] leading-7 font-medium text-[#6fa4dc]">极光下载站</div>
          <div className="font-['Liberation_Sans',sans-serif] text-base leading-5 font-bold text-[#6fbf8a]">www.xz7.com</div>
        </div>
      </div>
    </>
  );
}

export default function App() {
  return (
    <div className="relative flex h-screen flex-col overflow-hidden bg-[#e6e6e6] font-['Open_Sans','Noto_Sans_CJK_SC',sans-serif] text-xs">
      <TitleBar />
      <Ribbon />
      <QuickAccess />
      <div className="flex min-h-0 flex-1">
        <NavPane />
        <VerticalRuler />
        <div className="flex min-w-0 flex-1 flex-col items-center">
          <HorizontalRuler />
          <DocumentPage />
        </div>
        <ScrollBar />
      </div>
      <Overlays />
    </div>
  );
}
